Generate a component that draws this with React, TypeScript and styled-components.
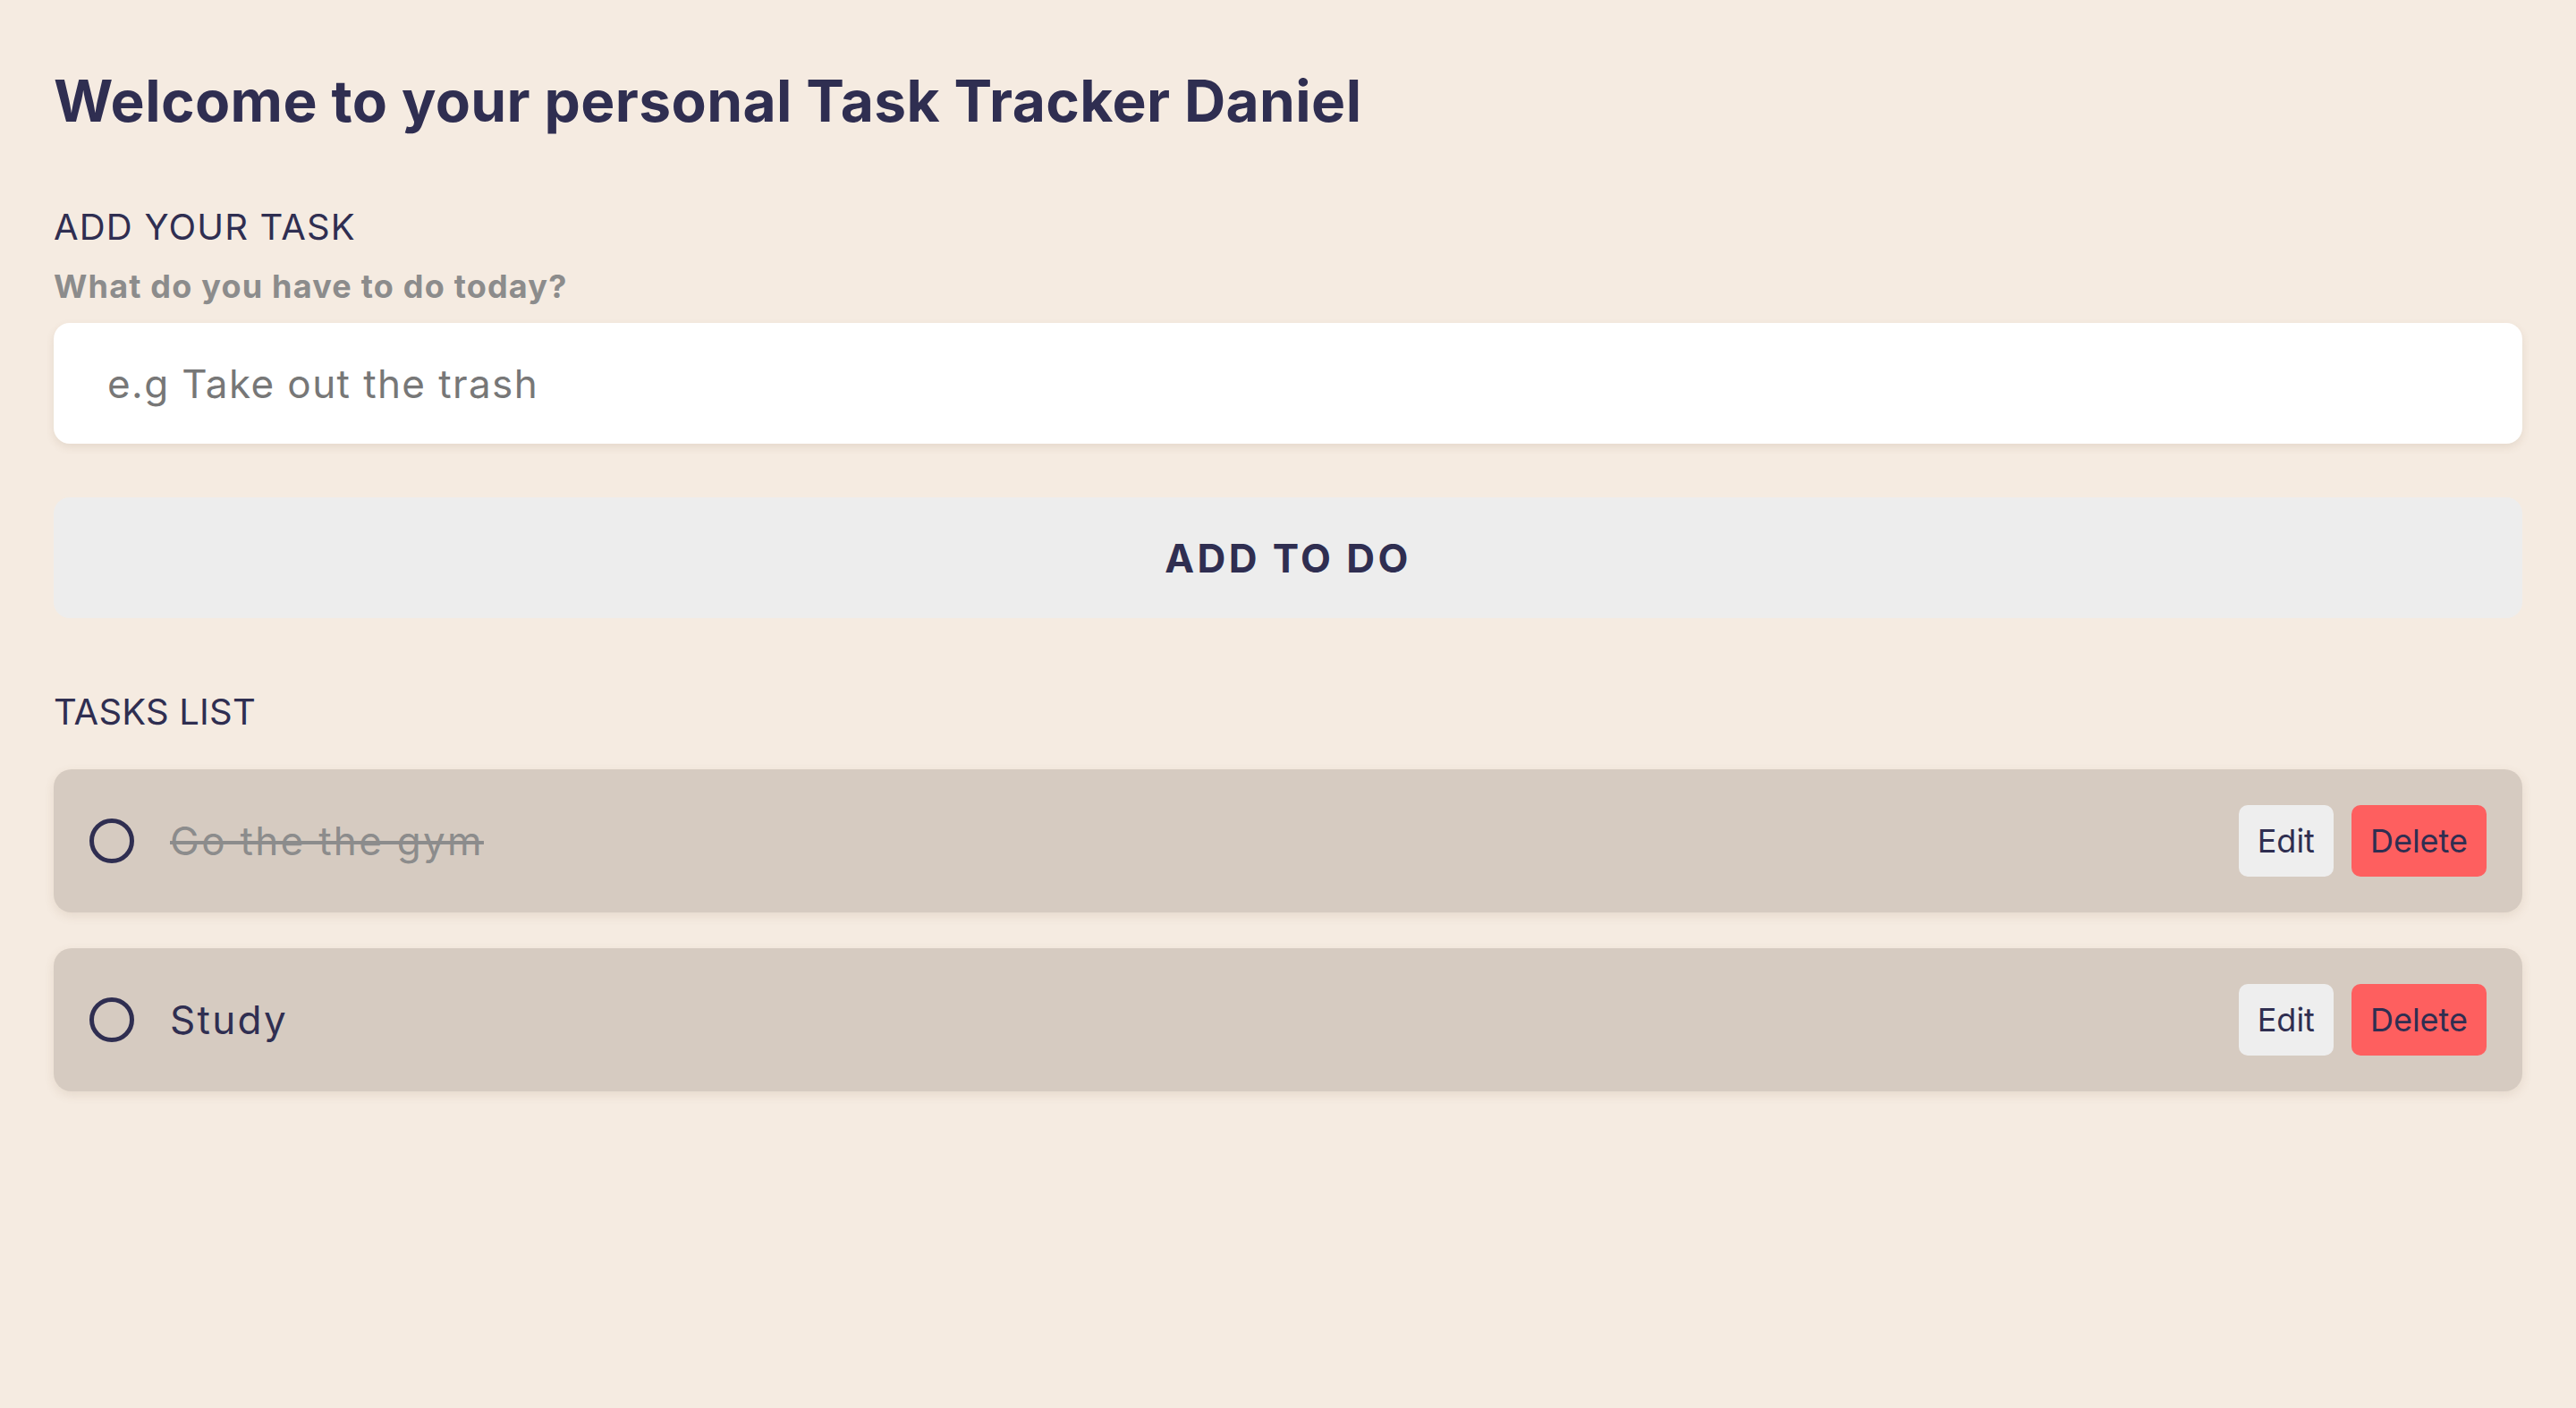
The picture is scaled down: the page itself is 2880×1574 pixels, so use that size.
import { useState } from "react";
import styled, { createGlobalStyle } from "styled-components";

const GlobalStyle = createGlobalStyle`
  html, body {
    margin: 0;
    padding: 0;
    background: #f5ebe1;
  }
  body {
    font-family: Inter, "Open Sans", sans-serif;
    color: #2f2e51;
  }
  * {
    box-sizing: border-box;
  }
`;

type Task = { id: number; title: string; done: boolean };

const initialTasks: Task[] = [
  { id: 1, title: "Go the the gym", done: true },
  { id: 2, title: "Study", done: false },
];

export default function App() {
  const [tasks, setTasks] = useState<Task[]>(initialTasks);
  const [value, setValue] = useState("");

  const addTask = () => {
    if (!value.trim()) return;
    setTasks([...tasks, { id: Date.now(), title: value, done: false }]);
    setValue("");
  };

  const toggle = (id: number) => {
    setTasks(tasks.map((t) => (t.id === id ? { ...t, done: !t.done } : t)));
  };

  const remove = (id: number) => {
    setTasks(tasks.filter((t) => t.id !== id));
  };

  return (
    <>
      <GlobalStyle />
      <Page>
        <Title>Welcome to your personal Task Tracker Daniel</Title>
        <SectionLabel $gap={76} $spacing={1.2}>
          ADD YOUR TASK
        </SectionLabel>
        <Question>What do you have to do today?</Question>
        <TaskInput
          placeholder="e.g Take out the trash"
          value={value}
          onChange={(e) => setValue(e.target.value)}
        />
        <AddButton onClick={addTask}>ADD TO DO</AddButton>
        <SectionLabel $gap={81} $spacing={0.2}>
          TASKS LIST
        </SectionLabel>
        <List>
          {tasks.map((task) => (
            <Card key={task.id}>
              <Check onClick={() => toggle(task.id)} />
              <TaskTitle $done={task.done}>{task.title}</TaskTitle>
              <Actions>
                <SmallButton>Edit</SmallButton>
                <SmallButton $danger onClick={() => remove(task.id)}>
                  Delete
                </SmallButton>
              </Actions>
            </Card>
          ))}
        </List>
      </Page>
    </>
  );
}

const Page = styled.div`
  padding: 72px 60px 60px;
  display: flex;
  flex-direction: column;
  min-height: 100vh;
`;

const Title = styled.h1`
  margin: 0;
  font-size: 64px;
  line-height: 82px;
  font-weight: 700;
  letter-spacing: 0.4px;
  color: #2f2e51;
`;

const SectionLabel = styled.h2<{ $gap: number; $spacing: number }>`
  margin: ${(p) => p.$gap}px 0 0;
  font-size: 40px;
  line-height: 48px;
  font-weight: 400;
  letter-spacing: ${(p) => p.$spacing}px;
  color: #2f2e51;
`;

const Question = styled.p`
  margin: 20px 0 0;
  font-size: 36px;
  line-height: 44px;
  font-weight: 700;
  letter-spacing: 1.2px;
  color: #8c8c8c;
`;

const TaskInput = styled.input`
  margin-top: 19px;
  height: 135px;
  width: 100%;
  border: none;
  outline: none;
  border-radius: 18px;
  background: #ffffff;
  padding: 0 60px;
  font-family: inherit;
  font-size: 44px;
  letter-spacing: 1.4px;
  color: #2f2e51;
  box-shadow: 0 4px 10px rgba(120, 90, 60, 0.12);
  &::placeholder {
    color: #777777;
  }
`;

const AddButton = styled.button`
  margin-top: 60px;
  height: 135px;
  width: 100%;
  border: none;
  border-radius: 18px;
  background: #ededed;
  font-family: inherit;
  font-size: 44px;
  font-weight: 700;
  letter-spacing: 3.4px;
  color: #2f2e51;
  cursor: pointer;
`;

const List = styled.div`
  margin-top: 40px;
  display: flex;
  flex-direction: column;
  gap: 40px;
`;

const Card = styled.div`
  height: 160px;
  display: flex;
  align-items: center;
  padding: 0 40px;
  background: #d6cbc1;
  border-radius: 20px;
  box-shadow: 0 4px 12px rgba(120, 90, 60, 0.12);
`;

const Check = styled.span`
  width: 50px;
  height: 50px;
  border: 5px solid #2f2e51;
  border-radius: 50%;
  flex-shrink: 0;
  cursor: pointer;
`;

const TaskTitle = styled.span<{ $done: boolean }>`
  margin-left: 40px;
  font-size: 44px;
  letter-spacing: 2.3px;
  color: ${(p) => (p.$done ? "#8c8c8c" : "#2f2e51")};
  text-decoration: ${(p) => (p.$done ? "line-through" : "none")};
  text-decoration-thickness: 4px;
`;

const Actions = styled.div`
  margin-left: auto;
  display: flex;
  gap: 20px;
`;

const SmallButton = styled.button<{ $danger?: boolean }>`
  height: 80px;
  padding: 0 21px;
  border: none;
  border-radius: 10px;
  background: ${(p) => (p.$danger ? "#fe5f5f" : "#eeeeee")};
  font-family: inherit;
  font-size: 36px;
  color: #2f2e51;
  cursor: pointer;
`;
